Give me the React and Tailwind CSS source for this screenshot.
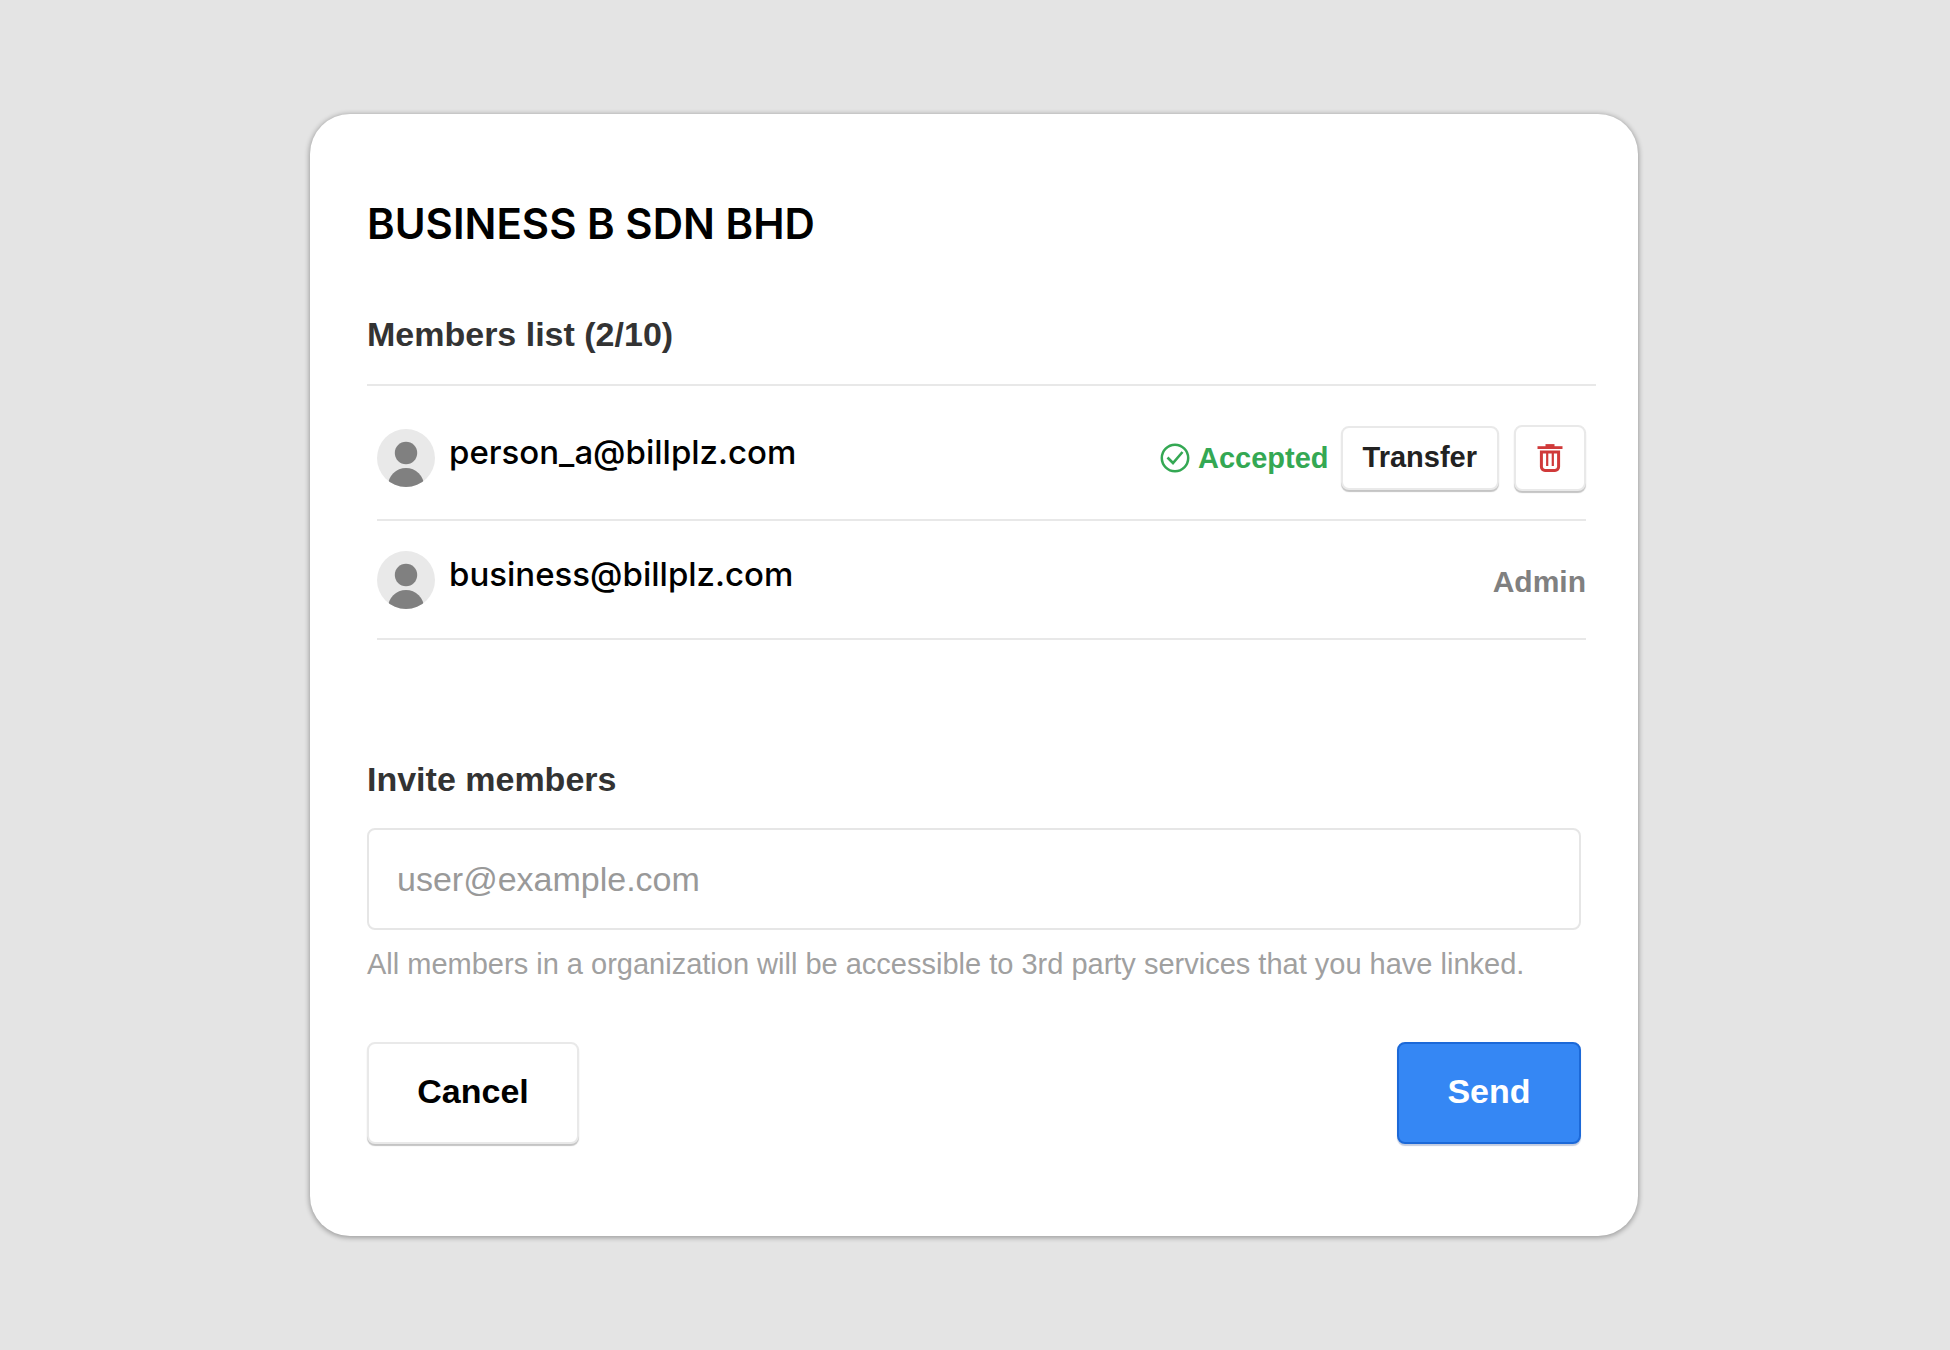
import React from 'react';

const members = [
  { email: 'person_a@billplz.com', role: 'member' },
  { email: 'business@billplz.com', role: 'admin' },
];

const buttonClass =
  'rounded-lg border-2 border-[#e9e9e9] bg-white font-bold shadow-[0_2px_1px_#c4c4c4]';

function Avatar() {
  return (
    <svg viewBox="0 0 58 58" className="size-[58px] shrink-0" aria-hidden="true">
      <clipPath id="avatar-clip">
        <circle cx="29" cy="29" r="29" />
      </clipPath>
      <circle cx="29" cy="29" r="29" fill="#e9e9e9" />
      <g clipPath="url(#avatar-clip)" fill="#808080">
        <circle cx="29" cy="24" r="11.2" />
        <circle cx="29" cy="57" r="18" />
      </g>
    </svg>
  );
}

function AcceptedIcon() {
  return (
    <svg viewBox="0 0 30 30" className="size-[30px]" fill="none" stroke="#34a853" aria-hidden="true">
      <circle cx="15" cy="15" r="13.2" strokeWidth="2.5" />
      <path d="M7.5 14.5l5.5 5.5L22.5 9" strokeWidth="2.6" />
    </svg>
  );
}

function TrashIcon() {
  return (
    <svg viewBox="0 0 26 28" className="h-[28px] w-[26px]" fill="none" stroke="#d03a3a" aria-hidden="true">
      <path d="M.5 3.6h25" strokeWidth="2.8" />
      <path d="M8.5 1.6h9" strokeWidth="3" />
      <path d="M4.4 8h17.2v14.8a3.6 3.6 0 0 1-3.6 3.6H8a3.6 3.6 0 0 1-3.6-3.6z" strokeWidth="3" />
      <path d="M10.2 8v14M15.8 8v14" strokeWidth="2.2" />
    </svg>
  );
}

function MemberRow({ member }) {
  const isAdmin = member.role === 'admin';

  return (
    <li className={`flex items-center border-b-2 border-[#e8e8e8] ${isAdmin ? 'h-[119px]' : 'h-[135px] pt-2.5'}`}>
      <Avatar />
      <span className="ml-3.5 pb-3 font-[Inter,sans-serif] text-[33px] leading-10 font-medium text-black">
        {member.email}
      </span>
      {isAdmin ? (
        <span className="ml-auto pt-1 text-[30px] leading-9 font-bold text-[#808080]">Admin</span>
      ) : (
        <div className="ml-auto flex items-center">
          <span className="flex items-center gap-2 text-[29px] leading-9 font-bold text-[#34a853]">
            <AcceptedIcon />
            Accepted
          </span>
          <button type="button" className={`${buttonClass} ml-3 h-16 px-5 text-[29px] text-[#222]`}>
            Transfer
          </button>
          <button
            type="button"
            aria-label="Remove member"
            className={`${buttonClass} ml-[15px] flex h-[66px] w-[72px] items-center justify-center`}
          >
            <TrashIcon />
          </button>
        </div>
      )}
    </li>
  );
}

export default function App() {
  return (
    <div className="flex min-h-screen items-center justify-center bg-[#e4e4e4] pr-0.5 font-['Liberation_Sans',Arial,sans-serif]">
      <main className="w-full max-w-[1328px] rounded-[40px] bg-white pt-[84px] pr-[42px] pb-[92px] pl-[57px] shadow-[0_1px_5px_1px_rgba(0,0,0,0.3)]">
        <h1 className="font-[Inter,sans-serif] text-[42px] leading-[52px] font-semibold text-black">
          BUSINESS B SDN BHD
        </h1>

        <section>
          <h2 className="mt-16 text-[34px] leading-10 font-bold text-[#333]">Members list (2/10)</h2>
          <ul className="mt-[30px] border-t-2 border-[#e8e8e8] px-2.5">
            {members.map((member) => (
              <MemberRow key={member.email} member={member} />
            ))}
          </ul>
        </section>

        <form className="mt-[119px] mr-[15px]" onSubmit={(e) => e.preventDefault()}>
          <label htmlFor="invite-email" className="block text-[34px] leading-10 font-bold text-[#333]">
            Invite members
          </label>
          <input
            id="invite-email"
            type="email"
            placeholder="user@example.com"
            className="mt-[29px] block h-[102px] w-full rounded-lg border-2 border-[#e6e6e6] bg-white px-7 text-[34px] text-[#333] placeholder:text-[#999]"
          />
          <p className="mt-4 text-[29px] leading-9 text-[#a0a0a0]">
            All members in a organization will be accessible to 3rd party services that you have linked.
          </p>
          <div className="mt-[60px] flex justify-between">
            <button type="button" className={`${buttonClass} h-[102px] w-[212px] pb-1 text-[34px] text-black`}>
              Cancel
            </button>
            <button
              type="submit"
              className="h-[102px] w-[184px] rounded-lg border-2 border-[#1c69d8] bg-[#3587f4] pb-1 text-[34px] font-bold text-white shadow-[0_2px_1px_#c3cce0]"
            >
              Send
            </button>
          </div>
        </form>
      </main>
    </div>
  );
}
